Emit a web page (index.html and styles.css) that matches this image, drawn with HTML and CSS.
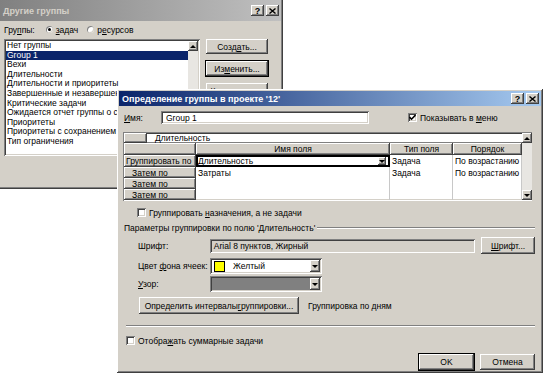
FILE: index.html
```html
<!DOCTYPE html>
<html lang="ru">
<head>
    <meta charset="UTF-8">
    <title>Определение группы</title>
    <link rel="stylesheet" href="styles.css">
</head>
<body>

    <!-- окно "Другие группы" (на заднем плане) -->
    <div class="win back raised">
        <div class="titlebar inactive">
            <span class="ttl">Другие группы</span>
            <span class="tbtns">
                <span class="tbtn raised">?</span>
                <span class="tbtn raised"><svg width="7" height="6" viewBox="0 0 7 6"><path d="M0.5 0.5 L6.5 5.5 M6.5 0.5 L0.5 5.5" stroke="#000" stroke-width="1.4"/></svg></span>
            </span>
        </div>
        <div class="back-body">
            <div class="radios">
                <span>Гру<u>п</u>пы:</span>
                <span class="radio on"></span><span><u>з</u>адач</span>
                <span class="radio"></span><span>р<u>е</u>сурсов</span>
            </div>
            <div class="back-main">
                <div class="list sunken">
                    <div class="items">
                        <div class="item">Нет группы</div>
                        <div class="item sel">Group 1</div>
                        <div class="item">Вехи</div>
                        <div class="item">Длительности</div>
                        <div class="item">Длительности и приоритеты</div>
                        <div class="item">Завершенные и незавершенные задачи</div>
                        <div class="item">Критические задачи</div>
                        <div class="item">Ожидается отчет группы о состоянии</div>
                        <div class="item">Приоритеты</div>
                        <div class="item">Приоритеты с сохранением структуры</div>
                        <div class="item">Тип ограничения</div>
                    </div>
                    <div class="list-scroll">
                        <span class="sbtn raised"><span class="tri up"></span></span>
                    </div>
                </div>
                <div class="side-btns">
                    <div class="btn raised">Созд<u>а</u>ть...</div>
                    <div class="btn raised def">Из<u>м</u>енить...</div>
                    <div class="btn raised">Копировать...</div>
                </div>
            </div>
        </div>
    </div>

    <!-- окно "Определение группы" (активное) -->
    <div class="win front raised">
        <div class="titlebar active">
            <span class="ttl">Определение группы в проекте '12'</span>
            <span class="tbtns">
                <span class="tbtn raised">?</span>
                <span class="tbtn raised"><svg width="7" height="6" viewBox="0 0 7 6"><path d="M0.5 0.5 L6.5 5.5 M6.5 0.5 L0.5 5.5" stroke="#000" stroke-width="1.4"/></svg></span>
            </span>
        </div>

        <div class="front-body">
            <div class="name-row">
                <span class="name-lbl"><u>И</u>мя:</span>
                <span class="field sunken name-field">Group 1</span>
                <span class="chk sunken"><svg width="7" height="7" viewBox="0 0 7 7"><path d="M0.5 3 L2.5 5.2 L6.5 1" fill="none" stroke="#000" stroke-width="1.6"/></svg></span>
                <span>Показывать в <u>м</u>еню</span>
            </div>

            <div class="grid sunken">
                <div class="grid-main">
                    <div class="edit-row">
                        <span class="corner raised"></span>
                        <span class="edit">Длительность</span>
                    </div>
                    <div class="table">
                        <span class="hcell raised"></span>
                        <span class="hcell raised">Имя поля</span>
                        <span class="hcell raised">Тип поля</span>
                        <span class="hcell raised">Порядок</span>

                        <span class="rcell raised first">Группировать по</span>
                        <span class="cell current">Длительность<span class="dd raised"><span class="tri down"></span></span></span>
                        <span class="cell">Задача</span>
                        <span class="cell">По возрастанию</span>

                        <span class="rcell raised">Затем по</span>
                        <span class="cell">Затраты</span>
                        <span class="cell">Задача</span>
                        <span class="cell">По возрастанию</span>

                        <span class="rcell raised">Затем по</span>
                        <span class="cell"></span>
                        <span class="cell"></span>
                        <span class="cell"></span>

                        <span class="rcell raised">Затем по</span>
                        <span class="cell"></span>
                        <span class="cell"></span>
                        <span class="cell"></span>
                    </div>
                </div>
                <div class="vscroll">
                    <span class="sbtn raised"><span class="tri up"></span></span>
                    <span class="sbtn raised"><span class="tri down"></span></span>
                </div>
            </div>

            <div class="assign-row">
                <span class="chk sunken"></span>
                <span>Группировать <u>н</u>азначения, а не задачи</span>
            </div>

            <div class="group-head">
                <span>Параметры группировки по полю 'Длительность'</span>
                <span class="etch"></span>
            </div>

            <div class="opt-row font-row">
                <span class="opt-lbl">Шрифт:</span>
                <span class="field sunken font-field">Arial 8 пунктов, Жирный</span>
                <span class="btn raised font-btn"><u>Ш</u>рифт...</span>
            </div>

            <div class="opt-row">
                <span class="opt-lbl">Цвет <u>ф</u>она ячеек:</span>
                <span class="combo sunken">
                    <span class="swatch"></span>
                    <span class="combo-text">Желтый</span>
                    <span class="dd raised"><span class="tri down"></span></span>
                </span>
            </div>

            <div class="opt-row pattern-row">
                <span class="opt-lbl"><u>У</u>зор:</span>
                <span class="combo sunken pattern">
                    <span class="combo-text"></span>
                    <span class="dd raised"><span class="tri down"></span></span>
                </span>
            </div>

            <div class="interval-row">
                <span class="btn raised interval-btn">Определить интервалы <u>г</u>руппировки...</span>
                <span>Группировка по дням</span>
            </div>

            <div class="separator"></div>

            <div class="summary-row">
                <span class="chk sunken"></span>
                <span>Отобра<u>ж</u>ать суммарные задачи</span>
            </div>

            <div class="footer">
                <span class="btn raised def ok-btn">OK</span>
                <span class="btn raised">Отмена</span>
            </div>
        </div>
    </div>

</body>
</html>
```

FILE: styles.css
```css
body {
    margin: 0;
    width: 543px;
    height: 377px;
    position: relative;
    overflow: hidden;
    background-color: #ffffff;
    font-family: "Liberation Sans", Arial, sans-serif;
    font-size: 8.5px;
    color: #000000;
}

u {
    text-decoration: underline;
    text-underline-offset: 1px;
}

/* классические 3D рамки */
.raised {
    background-color: #d4d0c8;
    box-shadow: inset -1px -1px #404040, inset 1px 1px #ffffff, inset -2px -2px #808080, inset 2px 2px #d4d0c8;
}

.sunken {
    box-shadow: inset 1px 1px #808080, inset -1px -1px #ffffff, inset 2px 2px #404040, inset -2px -2px #d4d0c8;
}

.win {
    position: absolute;
    box-sizing: border-box;
    padding: 2px;
    display: flex;
    flex-direction: column;
}

.back {
    left: -2px;
    top: -2px;
    width: 285px;
    height: 191px;
}

.front {
    left: 117px;
    top: 89px;
    width: 426px;
    height: 284px;
}

.titlebar {
    display: flex;
    align-items: center;
    justify-content: space-between;
    color: #ffffff;
    font-weight: bold;
    font-size: 9px;
    padding: 0 2px 0 3px;
}

.titlebar.inactive {
    height: 21px;
    background: linear-gradient(90deg, #808080, #c0c0c0);
    color: #d4d0c8;
}

.titlebar.active {
    height: 15px;
    background: linear-gradient(90deg, #0a246a, #a6caf0);
}

.tbtns {
    display: flex;
    gap: 2px;
}

.tbtn {
    width: 13px;
    height: 11px;
    display: flex;
    align-items: center;
    justify-content: center;
    color: #000000;
    font-size: 9px;
    font-weight: bold;
}

.tbtn svg {
    display: block;
}

/* ---- задний диалог ---- */
.back-body {
    padding: 3px 0 0 4px;
}

.radios {
    display: flex;
    align-items: center;
    height: 11px;
}

.radio {
    width: 7px;
    height: 7px;
    border-radius: 50%;
    background-color: #ffffff;
    box-shadow: inset 1px 1px #808080, inset -1px -1px #d4d0c8;
    margin: 0 3px 0 11px;
    position: relative;
}

.radio.on::after {
    content: "";
    position: absolute;
    left: 2px;
    top: 2px;
    width: 3px;
    height: 3px;
    border-radius: 50%;
    background-color: #000000;
}

.radio + span + .radio {
    margin-left: 9px;
}

.back-main {
    display: flex;
    margin-top: 4px;
    gap: 6px;
}

.list {
    width: 196px;
    height: 117px;
    background-color: #ffffff;
    display: flex;
    box-sizing: border-box;
    padding: 2px;
    overflow: hidden;
}

.items {
    flex: 1;
    overflow: hidden;
}

.item {
    height: 9.6px;
    line-height: 9.6px;
    padding-left: 1px;
    white-space: nowrap;
}

.item.sel {
    background-color: #0a246a;
    color: #ffffff;
}

.list-scroll {
    width: 10px;
    background-color: #e8e6e2;
}

.sbtn {
    width: 10px;
    height: 10px;
    display: flex;
    align-items: center;
    justify-content: center;
}

.tri {
    width: 0;
    height: 0;
    border-left: 3px solid transparent;
    border-right: 3px solid transparent;
}

.tri.up {
    border-bottom: 3px solid #000000;
}

.tri.down {
    border-top: 3px solid #000000;
}

.side-btns {
    display: flex;
    flex-direction: column;
    gap: 7px;
}

.btn {
    height: 15px;
    box-sizing: border-box;
    display: flex;
    align-items: center;
    justify-content: center;
    white-space: nowrap;
}

.side-btns .btn {
    width: 62px;
}

.btn.def {
    outline: 1px solid #000000;
}

/* ---- передний диалог ---- */
.front-body {
    display: flex;
    flex-direction: column;
    padding: 0 6px 0 4px;
    background-color: #d4d0c8;
    flex: 1;
}

.name-row {
    display: flex;
    align-items: center;
    height: 13px;
    margin-top: 5px;
}

.name-lbl {
    width: 37px;
    padding-left: 1px;
}

.field {
    background-color: #ffffff;
    display: flex;
    align-items: center;
    padding-left: 5px;
    box-sizing: border-box;
    white-space: nowrap;
}

.name-field {
    width: 208px;
    height: 13px;
    margin-right: 39px;
}

.chk {
    width: 9px;
    height: 9px;
    background-color: #ffffff;
    display: flex;
    align-items: center;
    justify-content: center;
    margin-right: 3px;
    flex-shrink: 0;
}

.chk svg {
    display: block;
}

.grid {
    display: flex;
    width: 409px;
    height: 69px;
    margin-top: 8px;
    box-sizing: border-box;
    padding: 1px;
    background-color: #ffffff;
}

.grid-main {
    flex: 1;
    display: flex;
    flex-direction: column;
}

.edit-row {
    display: flex;
    height: 10px;
}

.corner {
    width: 23px;
}

.edit {
    flex: 1;
    padding-left: 8px;
    line-height: 10px;
    border-bottom: 1px solid #808080;
}

.table {
    display: grid;
    grid-template-columns: 72px 194px 63px 69px;
    grid-template-rows: 12px 12px 11px 11px 11px;
}

.hcell {
    display: flex;
    align-items: center;
    justify-content: center;
}

.rcell {
    display: flex;
    align-items: center;
    padding-left: 8px;
    white-space: nowrap;
    overflow: hidden;
}

.rcell.first {
    padding-left: 2px;
}

.cell {
    display: flex;
    align-items: center;
    padding-left: 2px;
    border-right: 1px solid #c8c8c8;
    white-space: nowrap;
    position: relative;
}

.cell.current {
    outline: 2px solid #000000;
    outline-offset: -2px;
    z-index: 1;
}

.cell.current .dd {
    position: absolute;
    right: 3px;
    top: 2px;
    width: 8px;
    height: 8px;
}

.vscroll {
    width: 10px;
    display: flex;
    flex-direction: column;
    justify-content: space-between;
    background-color: #e8e6e2;
}

.assign-row {
    display: flex;
    align-items: center;
    height: 11px;
    margin: 6px 0 0 14px;
}

.group-head {
    display: flex;
    align-items: center;
    gap: 2px;
    height: 11px;
    margin-top: 4px;
    padding-left: 1px;
}

.etch {
    flex: 1;
    height: 0;
    border-top: 1px solid #808080;
    border-bottom: 1px solid #ffffff;
}

.opt-row {
    display: flex;
    align-items: center;
    margin-top: 4px;
    padding-left: 15px;
    height: 16px;
}

.font-row {
    height: 17px;
}

.pattern-row {
    margin-top: 2px;
}

.opt-lbl {
    width: 72px;
    white-space: nowrap;
}

.font-field {
    width: 266px;
    height: 14px;
    background-color: #d4d0c8;
    padding-left: 4px;
}

.font-btn {
    width: 54px;
    height: 17px;
    margin-left: 6px;
}

.combo {
    width: 112px;
    height: 16px;
    background-color: #ffffff;
    display: flex;
    align-items: center;
    box-sizing: border-box;
    padding: 2px;
}

.combo.pattern {
    background-color: #808080;
}

.swatch {
    width: 9px;
    height: 9px;
    background-color: #ffff00;
    border: 1px solid #000000;
    margin-left: 2px;
}

.combo-text {
    flex: 1;
    padding-left: 8px;
}

.combo .dd {
    width: 10px;
    height: 12px;
}

.dd {
    display: flex;
    align-items: center;
    justify-content: center;
}

.interval-row {
    display: flex;
    align-items: center;
    gap: 9px;
    margin: 5px 0 0 16px;
}

.interval-btn {
    width: 160px;
    height: 17px;
}

.separator {
    margin: 11px 0 0 3px;
    border-top: 1px solid #808080;
    border-bottom: 1px solid #ffffff;
}

.summary-row {
    display: flex;
    align-items: center;
    height: 11px;
    margin: 8px 0 0 3px;
}

.footer {
    display: flex;
    justify-content: flex-end;
    gap: 6px;
    margin-top: 8px;
}

.footer .btn {
    width: 55px;
    height: 16px;
}
```
